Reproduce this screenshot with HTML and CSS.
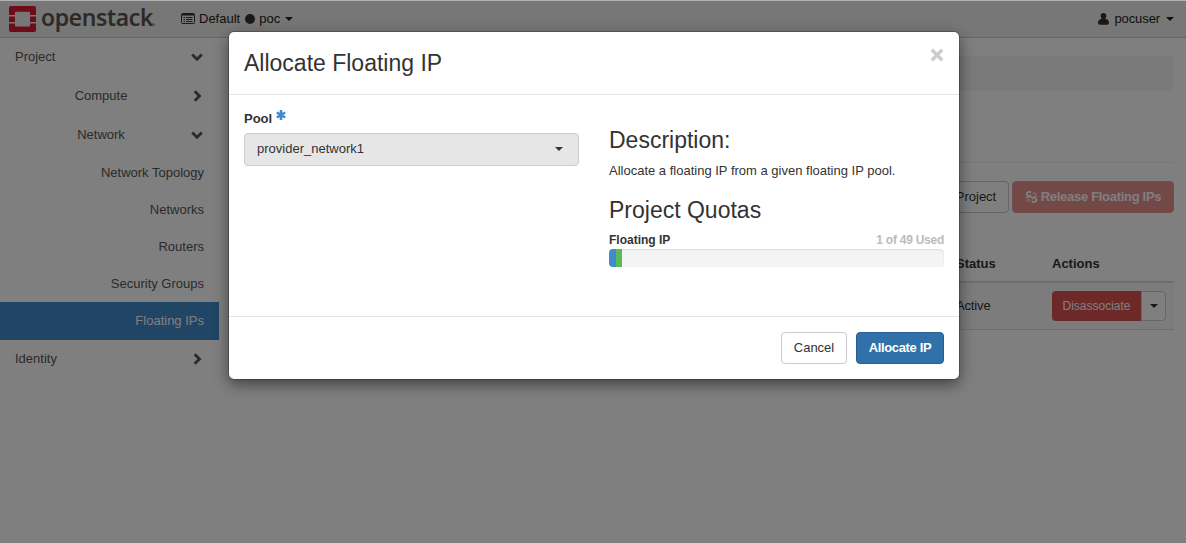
FILE: index.html
```html
<!DOCTYPE html>
<html lang="en">
<head>
<meta charset="utf-8">
<title>Floating IPs - OpenStack Dashboard</title>
<link rel="stylesheet" href="styles.css">
</head>
<body>
<div class="page">
  <header class="navbar">
    <a class="brand">
      <svg class="brand-mark" width="27" height="27" viewBox="0 0 27 27">
        <path fill="#da1a32" d="M2 0h23a2 2 0 0 1 2 2v7h-6V6.500a.7.7 0 0 0-.7-.7H6.700a.7.7 0 0 0-.7.7V9H0V2a2 2 0 0 1 2-2zM0 10.500h6v5.500H0zM21 10.500h6v5.500h-6zM0 17.500h6v2.200a.7.7 0 0 0 .7.7h13.600a.7.7 0 0 0 .7-.7v-2.200h6V24a2 2 0 0 1-2 2H2a2 2 0 0 1-2-2z"/>
      </svg>
      <span class="brand-name">openstack</span><span class="brand-dot"></span>
    </a>
    <div class="context">
      <svg width="14" height="12" viewBox="0 0 14 12"><path fill="none" stroke="#333" d="M.5 1.500a1 1 0 0 1 1-1h11a1 1 0 0 1 1 1v8a1 1 0 0 1-1 1h-11a1 1 0 0 1-1-1z"/><path fill="#333" d="M1 1h12v1.500H1zM2.500 4H4v1H2.500zM5 4h6.500v1H5zM2.500 6H4v1H2.500zM5 6h6.500v1H5zM2.500 8H4v1H2.500zM5 8h6.500v1H5z"/></svg>
      <span class="domain">Default</span><span class="dot"></span><span class="project">poc</span><span class="caret"></span>
    </div>
    <div class="user">
      <svg width="11" height="12" viewBox="0 0 11 12"><path fill="#333" d="M5.500 0a2.800 2.900 0 0 1 2.800 3c0 1.300-.5 2.300-1.100 2.900 2.200.2 3.800 1.400 3.800 3.800 0 1.200-.7 2-1.800 2H1.800C.7 11.700 0 10.900 0 9.700c0-2.400 1.600-3.600 3.800-3.800C3.200 5.300 2.700 4.300 2.700 3A2.800 2.900 0 0 1 5.500 0z"/></svg>
      <span class="username">pocuser</span><span class="caret"></span>
    </div>
  </header>
  <div class="columns">
    <nav class="sidebar">
      <a class="row top"><span>Project</span><svg class="chev" width="12" height="12" viewBox="0 0 12 12"><path d="M1.200 3.500 6 8.200l4.800-4.700"/></svg></a>
      <a class="row group"><span>Compute</span><svg class="chev" width="12" height="12" viewBox="0 0 12 12"><path d="M3.700 1.200 8.500 6l-4.800 4.800"/></svg></a>
      <a class="row group"><span>Network</span><svg class="chev" width="12" height="12" viewBox="0 0 12 12"><path d="M1.200 3.500 6 8.200l4.800-4.700"/></svg></a>
      <a class="row leaf">Network Topology</a>
      <a class="row leaf">Networks</a>
      <a class="row leaf">Routers</a>
      <a class="row leaf">Security Groups</a>
      <a class="row leaf active">Floating IPs</a>
      <a class="row top"><span>Identity</span><svg class="chev" width="12" height="12" viewBox="0 0 12 12"><path d="M3.700 1.200 8.500 6l-4.800 4.800"/></svg></a>
    </nav>
    <main class="content">
      <div class="breadcrumb"></div>
      <div class="page-title"></div>
      <div class="toolbar">
        <a class="btn btn-default">Project</a>
        <a class="btn btn-release">
          <svg width="13" height="12" viewBox="0 0 13 12" fill="none" stroke="#fff"><path stroke-width="1.900" d="M6.200 1.700C4.500.2 1.500 1 1.500 3.200c0 1.700 2.200 2 3.600 3.200M6.800 10.300c1.700 1.500 4.700.7 4.700-1.500 0-1.700-2.200-2-3.600-3.200"/><path d="M8 3.500 9.500.8M9.300 4.200 12 2.200M9.800 5.300h2.900M5 8.500l-1.500 2.700M3.700 7.800 1 9.800M3.200 6.700H.3"/><path stroke-width="1.500" d="M4.500 3.700l3.700 4.600"/></svg>
          <span>Release Floating IPs</span>
        </a>
      </div>
      <div class="table">
        <div class="tr th"><span class="status">Status</span><span class="actions">Actions</span></div>
        <div class="tr td"><span class="status">Active</span>
          <div class="btn-group"><a class="btn-danger">Disassociate</a><a class="toggle"><span class="caret"></span></a></div>
        </div>
      </div>
    </main>
  </div>
</div>
<div class="backdrop">
  <section class="modal">
    <div class="modal-header">
      <h3>Allocate Floating IP</h3>
      <svg class="close" width="14" height="14" viewBox="0 0 14 14"><path d="m1.800 1.800 10.400 10.400M12.200 1.800 1.800 12.200"/></svg>
    </div>
    <div class="modal-body">
      <div class="col">
        <div class="label"><span>Pool</span>
          <svg width="10" height="10" viewBox="0 0 10 10"><path stroke="#428bca" stroke-width="2.600" d="M5 0v10M.8 2.500l8.400 5M9.200 2.500l-8.400 5"/></svg>
        </div>
        <div class="select"><span>provider_network1</span><span class="caret"></span></div>
      </div>
      <div class="col right">
        <h3>Description:</h3>
        <p>Allocate a floating IP from a given floating IP pool.</p>
        <h3 class="quotas">Project Quotas</h3>
        <div class="quota-row"><strong>Floating IP</strong><span class="used">1 of 49 Used</span></div>
        <div class="progress"><div class="bar used-bar"></div><div class="bar new-bar"></div></div>
      </div>
    </div>
    <div class="modal-footer">
      <a class="btn btn-cancel">Cancel</a>
      <a class="btn btn-primary">Allocate IP</a>
    </div>
  </section>
</div>
</body>
</html>
```
FILE: styles.css
```css
* { box-sizing: border-box; }
body {
  margin: 0;
  height: 543px;
  overflow: hidden;
  background: #fff;
  color: #333;
  font: 13px/18px "Liberation Sans", Arial, sans-serif;
}
h3, p { margin: 0; }
h3 { font-size: 23px; line-height: 26px; font-weight: 400; }
svg { flex: none; }
.page { height: 543px; }
.caret {
  border: 4px solid transparent;
  border-top: 4px solid currentColor;
  border-bottom: 0;
}

.navbar {
  display: flex;
  align-items: center;
  height: 38px;
  padding: 0 12px 0 9px;
  background: #efefef;
  border-bottom: 1px solid #ccc;
}
.brand { display: flex; align-items: center; width: 172px; }
.brand-mark { margin-top: 1px; }
.brand-name {
  width: 110px;
  margin: -3px 0 0 5px;
  color: #585450;
  font: 600 23px/28px "Open Sans", "Noto Sans", sans-serif;
  letter-spacing: -0.300px;
  -webkit-text-stroke: .2px #585450;
}
.brand-dot { width: 3px; height: 3px; margin: 12px 0 0 1px; border-radius: 50%; background: #999; }
.context, .user { display: flex; align-items: center; color: #222; }
.domain { margin-left: 4px; }
.dot { width: 10px; height: 10px; margin: 0 4px 0 5px; border-radius: 50%; background: #333; }
.project { margin-right: 5px; }
.user { margin-left: auto; }
.username { margin: 0 6px 0 5px; letter-spacing: -.1px; }

.columns { display: flex; }
.sidebar { width: 219px; }
.row { display: flex; align-items: center; height: 39px; padding: 0 16px 0 15px; color: #555; }
.top { justify-content: space-between; height: 38px; }
.group { padding-left: 11px; }
.group span { flex: 1; text-align: center; }
.leaf { justify-content: flex-end; height: 37px; padding-right: 15px; }
.active { height: 38px; background: #428bca; color: #fff; }
.chev { fill: none; stroke: #555; stroke-width: 2.8; }

.content { flex: 1; padding: 18px 12px 0 15px; }
.breadcrumb { height: 35px; border-radius: 4px; background: #f5f5f5; }
.page-title { height: 72px; border-bottom: 1px solid #eee; }
.toolbar { display: flex; justify-content: flex-end; gap: 3px; margin-top: 18px; }
.btn {
  display: flex;
  align-items: center;
  justify-content: center;
  height: 32px;
  border: 1px solid #ccc;
  border-radius: 4px;
}
.btn-default { width: 66px; }
.btn-release { gap: 3px; width: 162px; border-color: #e69a98; background: #e69290; color: #fff; font-weight: 700; letter-spacing: -.3px; }
.table { margin-top: 32px; }
.tr { display: flex; align-items: center; justify-content: flex-end; }
.th { height: 38px; padding-top: 2px; border-bottom: 2px solid #ddd; font-weight: 700; }
.td { height: 47px; padding-right: 8px; border-bottom: 1px solid #ddd; background: #f9f9f9; }
.status { width: 96px; }
.td .status { letter-spacing: -.15px; }
.actions { width: 122px; }
.btn-group { display: flex; width: 114px; height: 30px; }
.btn-danger { display: flex; align-items: center; justify-content: center; width: 89px; border-radius: 4px 0 0 4px; background: #d9534f; color: #fff; font-size: 12px; }
.toggle { display: flex; align-items: center; justify-content: center; width: 25px; border: 1px solid #ccc; border-radius: 0 4px 4px 0; background: #fff; }

.backdrop {
  position: absolute;
  inset: 0;
  padding: 31px 0 0 229px;
  border-top: 1px solid #b2b2b2;
  background: rgba(0, 0, 0, .5);
}
.modal {
  width: 730px;
  height: 347px;
  border-radius: 5px;
  background: #fff;
  box-shadow: 0 0 0 1px rgba(0, 0, 0, .2), 0 5px 15px rgba(0, 0, 0, .5);
}
.modal-header {
  display: flex;
  justify-content: space-between;
  height: 63px;
  padding: 18px 15px 0;
  border-bottom: 1px solid #e5e5e5;
}
.close { margin-top: -2px; fill: none; stroke: #ccc; stroke-width: 3.4; }
.modal-body { display: flex; gap: 30px; height: 221px; padding: 15px 15px 0; }
.col { width: 335px; }
.label { display: flex; gap: 4px; height: 23px; font-weight: 700; }
.select {
  display: flex;
  align-items: center;
  justify-content: space-between;
  height: 33px;
  padding: 0 15px 2px 12px;
  border: 1px solid #ccc;
  border-radius: 4px;
  background: #e6e6e6;
}
.right { padding-top: 17px; }
.right p { margin-top: 9px; }
.quotas { margin-top: 17px; }
.quota-row { display: flex; justify-content: space-between; height: 18px; margin-top: 8px; font-size: 12px; }
.used { color: #bbb; font-weight: 700; letter-spacing: -.25px; }
.progress { display: flex; height: 18px; overflow: hidden; border-radius: 4px; background: #f4f4f4; box-shadow: inset 0 1px 2px rgba(0, 0, 0, .1); }
.used-bar { width: 7px; background: #428bca; }
.new-bar { width: 6px; background: #5cb85c; }
.modal-footer { display: flex; justify-content: flex-end; gap: 9px; height: 63px; padding: 15px 15px 0; border-top: 1px solid #e5e5e5; }
.btn-cancel { width: 66px; }
.btn-primary { width: 88px; border-color: #285e8e; background: #3071a9; color: #fff; font-weight: 700; letter-spacing: -.35px; }
```
